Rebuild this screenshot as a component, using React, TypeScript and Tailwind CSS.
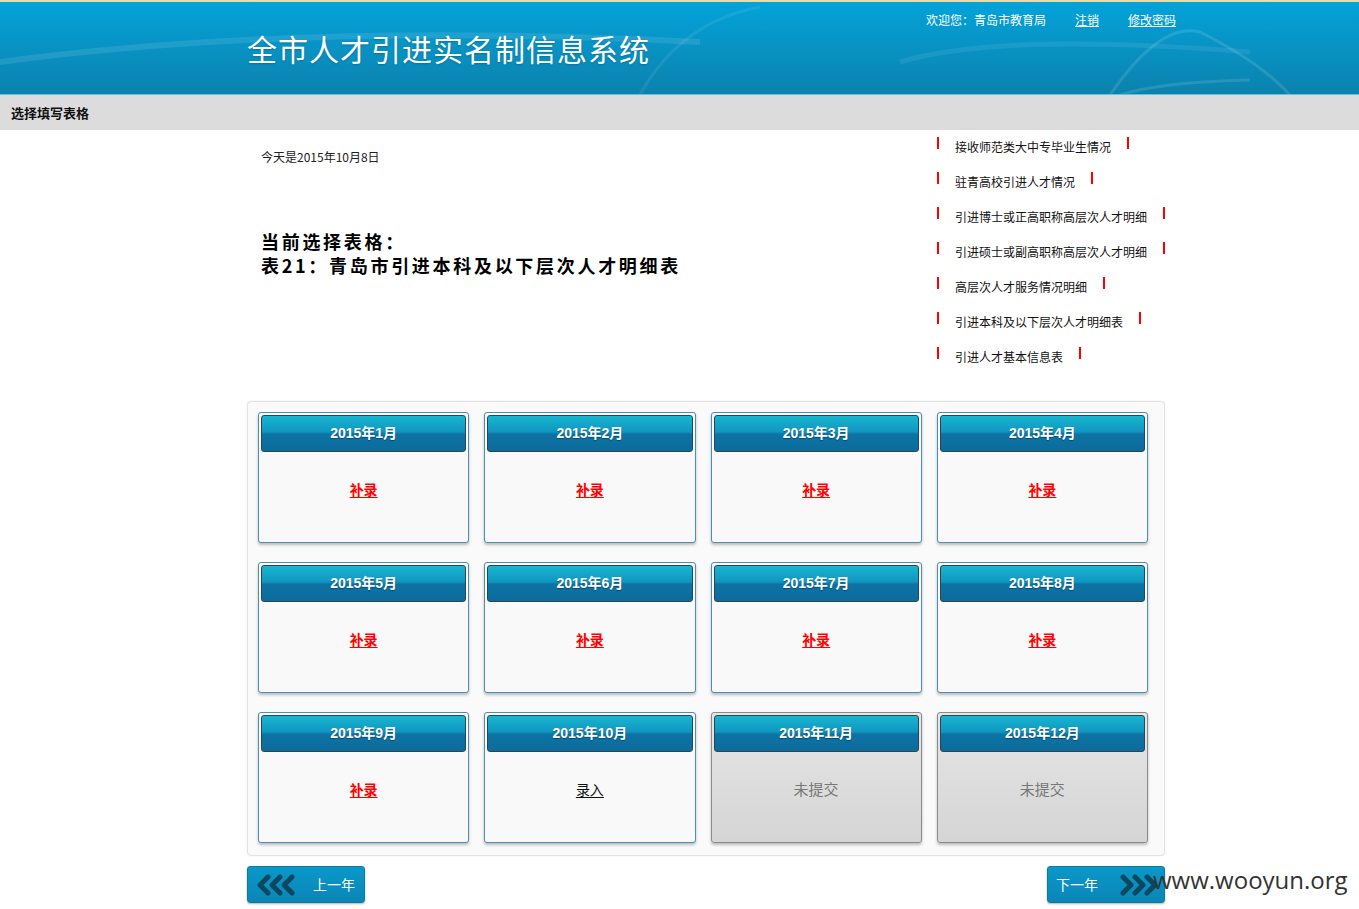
import React from 'react';

const links = [
  '接收师范类大中专毕业生情况',
  '驻青高校引进人才情况',
  '引进博士或正高职称高层次人才明细',
  '引进硕士或副高职称高层次人才明细',
  '高层次人才服务情况明细',
  '引进本科及以下层次人才明细表',
  '引进人才基本信息表'
];

type Month = { label: string; state: 'fill' | 'enter' | 'none' };

const months: Month[] = [
  { label: '2015年1月', state: 'fill' },
  { label: '2015年2月', state: 'fill' },
  { label: '2015年3月', state: 'fill' },
  { label: '2015年4月', state: 'fill' },
  { label: '2015年5月', state: 'fill' },
  { label: '2015年6月', state: 'fill' },
  { label: '2015年7月', state: 'fill' },
  { label: '2015年8月', state: 'fill' },
  { label: '2015年9月', state: 'fill' },
  { label: '2015年10月', state: 'enter' },
  { label: '2015年11月', state: 'none' },
  { label: '2015年12月', state: 'none' }
];

function Chevrons({ dir }: { dir: 'left' | 'right' }) {
  const pts = [0, 12, 24];
  return (
    <svg width="38" height="22" viewBox="0 0 38 22" className={dir === 'right' ? 'scale-x-[-1]' : ''}>
      {pts.map((x) => (
        <polyline
          key={x}
          points={`${x + 11},3 ${x + 3},11 ${x + 11},19`}
          fill="none"
          stroke="#0b4860"
          strokeWidth="5"
          strokeLinecap="round"
          strokeLinejoin="round"
        />
      ))}
    </svg>
  );
}

function MonthCard({ m }: { m: Month }) {
  const off = m.state === 'none';
  return (
    <div
      className={
        'h-[131px] rounded-[3px] border p-[2px] shadow-[0_2px_3px_rgba(0,0,0,0.25)] ' +
        (off
          ? 'border-[#8a8a8a] bg-gradient-to-b from-[#e6e6e6] to-[#d5d5d5]'
          : 'border-[#4a8fb8] bg-[#f9f9f9]')
      }
    >
      <div className="h-[37px] rounded-[3px] border border-[#2b4555] bg-[linear-gradient(to_bottom,#17b6d0_0%,#1196c1_45%,#0d73a4_52%,#0c6c9c_100%)] flex items-center justify-center text-white text-[14px] font-bold font-['Liberation_Sans','Noto_Sans_CJK_SC',sans-serif] [text-shadow:0_1px_1px_rgba(0,0,0,0.35)]">
        {m.label}
      </div>
      <div className="pt-[27px] text-center text-[14px] font-['Noto_Sans_CJK_SC',sans-serif] leading-[20px]">
        {m.state === 'fill' && <span className="text-[#ff0000] font-bold underline underline-offset-2">补录</span>}
        {m.state === 'enter' && <span className="text-[#111] underline underline-offset-2">录入</span>}
        {m.state === 'none' && <span className="text-[#777] text-[15px]">未提交</span>}
      </div>
    </div>
  );
}

export default function App() {
  return (
    <div className="w-[1359px] min-h-[909px] bg-white font-['Noto_Sans_CJK_SC',sans-serif] text-[#111] relative overflow-hidden">
      {/* Header */}
      <div className="relative h-[95px] border-t-2 border-[#eadcaa] border-b border-b-[#5ec3e4] bg-gradient-to-b from-[#03a3da] to-[#0b82ad] overflow-hidden">
        <svg className="absolute inset-0" width="1359" height="93" viewBox="0 0 1359 93">
          <path d="M0 60 Q 300 20 700 40" stroke="rgba(255,255,255,0.10)" strokeWidth="6" fill="none" />
          <path d="M900 60 Q 1000 30 1250 50" stroke="rgba(255,255,255,0.08)" strokeWidth="5" fill="none" />
          <path d="M1110 93 Q 1160 20 1200 30 Q 1260 60 1290 93" stroke="rgba(255,255,255,0.12)" strokeWidth="3" fill="none" />
          <path d="M1120 93 Q 1160 80 1250 78" stroke="rgba(255,255,255,0.12)" strokeWidth="3" fill="none" />
          <path d="M640 93 Q 680 20 760 5" stroke="rgba(255,255,255,0.08)" strokeWidth="3" fill="none" />
        </svg>
        <div className="relative flex items-start">
          <div className="pl-[247px] pt-[28px] text-white text-[30px] leading-[36px] tracking-[1px] font-['Noto_Sans_CJK_SC',serif] [text-shadow:0_1px_2px_rgba(0,0,0,0.2)]">
            全市人才引进实名制信息系统
          </div>
          <div className="ml-auto mr-[183px] pt-[10px] flex gap-[29px] text-white text-[12px] leading-[16px]">
            <span>欢迎您：青岛市教育局</span>
            <span className="underline">注销</span>
            <span className="underline">修改密码</span>
          </div>
        </div>
      </div>

      {/* Crumb bar */}
      <div className="h-[35px] bg-[#dcdcdc] flex items-center pl-[11px] text-[13px] font-bold">
        选择填写表格
      </div>

      <div className="ml-[247px] w-[918px]">
        {/* Top info */}
        <div className="flex h-[271px]">
          <div className="pl-[14px] pt-[19px] w-[690px]">
            <div className="text-[12px] leading-[16px] text-[#222]">今天是2015年10月8日</div>
            <div className="mt-[64px] text-[18px] leading-[24px] font-bold text-black tracking-[2.7px]">
              <div>当前选择表格：</div>
              <div>表21：青岛市引进本科及以下层次人才明细表</div>
            </div>
          </div>
          <div className="mt-[-1px] flex flex-col">
            {links.map((l) => (
              <div key={l} className="h-[35px] flex items-center text-[12px] text-[#111]">
                <span className="w-[2px] h-[12px] bg-[#ff0000] mt-[-8px]" />
                <span className="ml-[16px]">{l}</span>
                <span className="ml-[16px] w-[2px] h-[12px] bg-[#ff0000] mt-[-8px]" />
              </div>
            ))}
          </div>
        </div>

        {/* Month grid */}
        <div className="rounded-[4px] border border-[#e2e2e2] bg-[#fafafa] px-[10px] pt-[10px] pb-[12px] shadow-[0_0_2px_rgba(0,0,0,0.08)]">
          <div className="grid grid-cols-4 gap-x-[15px] gap-y-[19px] pr-[6px]">
            {months.map((m) => (
              <MonthCard key={m.label} m={m} />
            ))}
          </div>
        </div>

        {/* Year nav */}
        <div className="flex justify-between mt-[10px]">
          <div className="w-[118px] h-[37px] rounded-[3px] border border-[#0b7ba6] bg-gradient-to-b from-[#0a98c9] to-[#0a86b6] shadow-[0_1px_2px_rgba(0,0,0,0.3)] flex items-center pl-[9px]">
            <Chevrons dir="left" />
            <span className="ml-[18px] text-white text-[14px]">上一年</span>
          </div>
          <div className="w-[118px] h-[37px] rounded-[3px] border border-[#0b7ba6] bg-gradient-to-b from-[#0a98c9] to-[#0a86b6] shadow-[0_1px_2px_rgba(0,0,0,0.3)] flex items-center pl-[8px]">
            <span className="text-white text-[14px]">下一年</span>
            <span className="ml-[22px]"><Chevrons dir="right" /></span>
          </div>
        </div>
      </div>

      {/* watermark */}
      <div className="absolute left-[1153px] top-[865px] text-[24px] leading-[30px] text-[#333] font-['Open_Sans',sans-serif]">
        www.wooyun.org
      </div>
    </div>
  );
}
